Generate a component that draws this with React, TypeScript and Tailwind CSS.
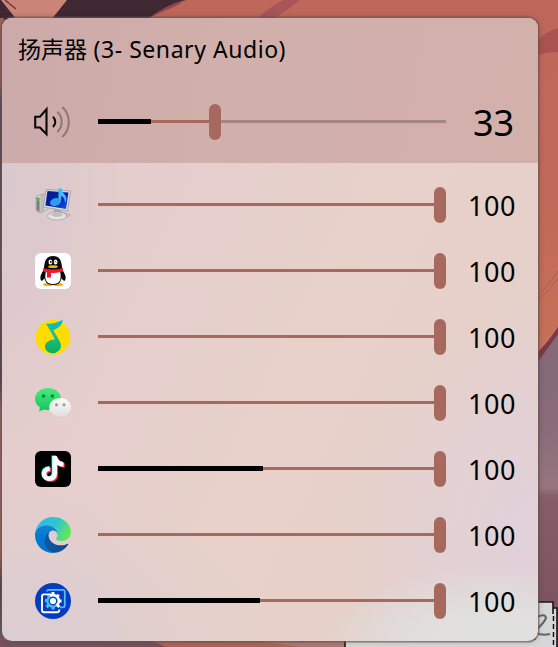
import type { ReactNode } from "react";

const fontStack = "font-['Noto_Sans','Noto_Sans_CJK_SC',sans-serif]";

function Wallpaper() {
  return (
    <svg className="absolute inset-0" width="558" height="647" viewBox="0 0 558 647" aria-hidden="true">
      <defs>
        <linearGradient id="coral" x1="0" y1="0" x2="0" y2="1">
          <stop offset="0" stopColor="#be675a" />
          <stop offset=".35" stopColor="#c26a58" />
          <stop offset=".55" stopColor="#c67158" />
        </linearGradient>
        <linearGradient id="mauve" x1="0" y1="0" x2="0" y2="1">
          <stop offset="0" stopColor="#826a75" />
          <stop offset=".3" stopColor="#886c78" />
          <stop offset=".5" stopColor="#96757f" />
          <stop offset=".53" stopColor="#855e68" />
          <stop offset="1" stopColor="#78505d" />
        </linearGradient>
        <linearGradient id="leftEdge" x1="0" y1="0" x2="0" y2="1">
          <stop offset="0" stopColor="#a0635c" />
          <stop offset=".1" stopColor="#a0635c" />
          <stop offset=".13" stopColor="#594b56" />
          <stop offset=".4" stopColor="#6a4c59" />
          <stop offset=".58" stopColor="#4c3f4a" />
          <stop offset=".62" stopColor="#9c675f" />
          <stop offset=".85" stopColor="#a56c60" />
          <stop offset=".9" stopColor="#533b47" />
          <stop offset="1" stopColor="#74616a" />
        </linearGradient>
      </defs>
      <rect width="558" height="647" fill="url(#coral)" />
      <path d="M0 0H186Q165 7 146 20H0Z" fill="#3f2831" />
      <path d="M1 0H67L51 20H17Q8 9 1 0Z" fill="#ca8478" />
      <path d="M5 0L16 9" stroke="#67313c" strokeWidth="1.3" />
      <path d="M184 0Q166 5 149 18L162 12Q180 5 184 0Z" fill="#8e4650" />
      <path d="M284 0Q266 9 258 18H275Q287 10 300 0Z" fill="#a8555a" />
      <path d="M538 39Q548 31 558 28V52Q548 52 538 55Z" fill="#a9534f" />
      <path d="M538 296Q551 282 558 271M538 300Q549 292 558 278" stroke="#a76058" strokeWidth="1" fill="none" />
      <path d="M538 361Q546 352 558 328V647H538Z" fill="url(#mauve)" />
      <path d="M538 352Q548 342 558 327V334Q548 348 538 362Z" fill="#7d3948" />
      <rect y="18" width="4" height="629" fill="url(#leftEdge)" />
      <path d="M0 640H150L170 647H0Z" fill="#75515d" />
      <path d="M150 640H344V647H166Z" fill="#aa6656" />
      <path d="M250 640H344V647H300Z" fill="#ad7a71" />
      <path d="M345 647V640H536V602H553V608H557V647Z" fill="#d7d7d7" />
      <path d="M345 647V640M536 602H553V614M553 608H557V647" stroke="#15171b" strokeWidth="1.6" fill="none" />
      <path d="M553.5 616V647" stroke="#111" strokeWidth="1.5" strokeDasharray="5 3" />
      <path d="M537 617Q545 613 546 618Q543 625 533 632Q541 636 550 634" stroke="#60656b" strokeWidth="2" fill="none" />
    </svg>
  );
}

function SpeakerIcon() {
  return (
    <svg width="38" height="36" viewBox="34 104 38 36" fill="none" aria-hidden="true">
      <path d="M35.2 116.8H40L46.5 109.3V134.2L40 127.5H35.2Z" stroke="#080606" strokeWidth="2.1" />
      <path d="M53 116.7Q57.5 121.8 53 127" stroke="#080606" strokeWidth="2" />
      <path d="M57.3 111.7A14 14 0 0 1 57.3 132M62.3 107A20.5 20.5 0 0 1 62.3 137" stroke="#8d7775" strokeWidth="2" />
    </svg>
  );
}

function SystemIcon() {
  return (
    <svg width="36" height="36" viewBox="0 0 36 36" aria-hidden="true">
      <defs>
        <linearGradient id="screen" x1="0" y1="0" x2="1" y2="1"><stop stopColor="#061a80" /><stop offset=".55" stopColor="#0622b8" /><stop offset="1" stopColor="#1b55ef" /></linearGradient>
        <linearGradient id="tower"><stop stopColor="#f5f5f3" /><stop offset=".5" stopColor="#b3b4b3" /><stop offset="1" stopColor="#e9e9e7" /></linearGradient>
      </defs>
      <path d="M1 9L9 7L13 9V22L5 26L1 24Z" fill="url(#tower)" stroke="#999c98" strokeWidth=".7" />
      <path d="M1.5 10L4.5 11V25L1.5 23Z" fill="#777d76" /><path d="M2 12L4 12.5V14L2 13.5Z" fill="#50df16" />
      <ellipse cx="26" cy="28" rx="10" ry="3" fill="#bdaaac" opacity=".6" />
      <path d="M19 22L27 24L26 29H19Z" fill="#a7aaa9" />
      <ellipse cx="22" cy="29" rx="9.5" ry="4" fill="#e4e5e4" stroke="#9b9e9d" strokeWidth=".7" />
      <ellipse cx="22" cy="27.8" rx="6" ry="2" fill="#bfc1c1" />
      <path d="M11 2.5L35.5 4L32.5 24L8.5 20Z" fill="#dfe1e0" stroke="#92918e" strokeWidth=".7" />
      <path d="M12.4 4L33.5 5.5L31 22L10.4 18.6Z" fill="url(#screen)" />
      <path d="M24.8 1.5V15" stroke="#42b8f2" strokeWidth="2.6" />
      <path d="M24 1.5H26.5Q27 5 29.5 7.5Q33 11 30 16Q30 10 26 9Z" fill="#48bbf3" />
      <ellipse cx="20.5" cy="15" rx="5.5" ry="3.9" transform="rotate(-18 20.5 15)" fill="#2f9fec" />
    </svg>
  );
}

function QQIcon() {
  return (
    <svg width="36" height="36" viewBox="0 0 36 36" aria-hidden="true">
      <rect width="36" height="36" rx="6" fill="#fff" />
      <path d="M10 15Q3 24 6.5 28Q9 27 12 21M26 15Q33 24 29.5 28Q27 27 24 21" fill="#070707" />
      <ellipse cx="13" cy="31.4" rx="5" ry="1.5" fill="#ffae00" /><ellipse cx="23" cy="31.4" rx="5" ry="1.5" fill="#ffae00" />
      <path d="M9 16Q9 3 18 3Q27 3 27 16V22Q27 32 18 32Q9 32 9 22Z" fill="#080808" />
      <path d="M11 18Q18 21 25 18Q28 31 18 31Q8 31 11 18Z" fill="#fff" />
      <path d="M8 15Q18 18 28 15V18.6Q18 21.5 8 18.6Z" fill="#f1172c" /><path d="M12 19H16V24.5H12Z" fill="#eb172b" />
      <ellipse cx="15.4" cy="9" rx="1.9" ry="2.5" fill="#fff" /><ellipse cx="20.6" cy="9" rx="1.9" ry="2.5" fill="#fff" />
      <circle cx="15.8" cy="9" r=".9" fill="#111" /><path d="M19.6 9.3Q20.5 7.8 21.3 9.3" stroke="#111" strokeWidth=".9" fill="none" />
      <ellipse cx="18" cy="13.7" rx="4.8" ry="1.4" fill="#ffb400" />
    </svg>
  );
}

function QQMusicIcon() {
  return (
    <svg width="36" height="36" viewBox="0 0 36 36" aria-hidden="true">
      <defs><linearGradient id="musicGreen" x1="0" y1="0" x2="0" y2="1"><stop stopColor="#0cbfba" /><stop offset=".5" stopColor="#20bb86" /><stop offset="1" stopColor="#0bad60" /></linearGradient></defs>
      <circle cx="18" cy="18.3" r="17.4" fill="#ffdc00" />
      <path d="M11.5 4.6Q21 5.2 27.8 .5Q27.5 8 18.3 11.2L24.8 22.6Q27.5 28 24 31.5Q19.5 35.8 13.5 33.2Q8.8 30.5 10.4 25.2Q12.6 20.4 20 20.4L16.3 13.5L11.5 5.4Z" fill="url(#musicGreen)" />
    </svg>
  );
}

function WeChatIcon() {
  return (
    <svg width="36" height="36" viewBox="0 0 36 36" aria-hidden="true">
      <defs><linearGradient id="chatGreen" x1="0" y1="0" x2="0" y2="1"><stop stopColor="#4bea7c" /><stop offset="1" stopColor="#12c65c" /></linearGradient><linearGradient id="chatWhite" x1="0" y1="0" x2="0" y2="1"><stop stopColor="#fafafa" /><stop offset="1" stopColor="#dedede" /></linearGradient></defs>
      <path d="M13 3C5.8 3 0 7.8 0 14Q0 19 5 22.5L4 26.5L9 24.5Q11 25 13 25C20 25 26 20.5 26 14S20 3 13 3Z" fill="url(#chatGreen)" />
      <circle cx="8.6" cy="11" r="1.8" fill="#078544" /><circle cx="17.3" cy="11" r="1.8" fill="#078544" />
      <path d="M25.2 13C19 13 14.2 17 14.2 22.3S19 31.5 25.2 31.5Q27.5 31.5 29 31L32 32.7L31.5 29.5Q36 27 36 22.3C36 17 31.5 13 25.2 13Z" fill="url(#chatWhite)" />
      <circle cx="21.5" cy="19.8" r="1.5" fill="#929695" /><circle cx="29" cy="19.8" r="1.5" fill="#929695" />
    </svg>
  );
}

function DouyinIcon() {
  const note = "M17.4 5H21.8Q22.6 10.4 28.5 11.2V15.8Q24.8 15.6 22 13.7V22Q21.8 30 14.5 30Q7 29.5 7 22.7Q7.2 16 14.8 15.4V20Q11.3 20.2 11.3 22.8Q11.5 25.6 14.5 25.6Q17.4 25.5 17.4 22Z";
  return (
    <svg width="36" height="36" viewBox="0 0 36 36" aria-hidden="true">
      <rect width="36" height="36" rx="6" fill="#000" />
      <path d={note} transform="translate(-.8 -.5)" fill="#25f4ee" /><path d={note} transform="translate(1.2 1)" fill="#fe2c55" /><path d={note} fill="#fff" />
    </svg>
  );
}

function EdgeIcon() {
  return (
    <svg width="36" height="36" viewBox="0 0 256 256" aria-hidden="true">
      <defs>
        <linearGradient id="edgeDark"><stop stopColor="#0c59a4" /><stop offset="1" stopColor="#114a8b" /></linearGradient>
        <linearGradient id="edgeBlue" x1="0" y1="0" x2="0" y2="1"><stop stopColor="#1687d0" /><stop offset=".5" stopColor="#0078d4" /><stop offset="1" stopColor="#0671cc" /></linearGradient>
        <linearGradient id="edgeTop" x1="0" y1=".3" x2="1" y2=".7"><stop stopColor="#35b8f0" /><stop offset=".5" stopColor="#2dc5cf" /><stop offset=".75" stopColor="#51d890" /><stop offset="1" stopColor="#66eb43" /></linearGradient>
      </defs>
      <path d="M231 190.5c-3.4 1.8-6.9 3.4-10.5 4.7a101.9 101.9 0 0 1-35.9 6.5c-47.3 0-88.5-32.5-88.5-74.3a31.5 31.5 0 0 1 16.4-27.3c-42.8 1.8-53.8 46.4-53.8 72.5 0 74 68.1 81.4 82.8 81.4 7.9 0 19.8-2.3 27-4.6l1.3-.4a128.3 128.3 0 0 0 66.6-52.8 4 4 0 0 0-5.4-5.7z" fill="url(#edgeDark)" />
      <path d="M105.7 241.4a79.2 79.2 0 0 1-22.7-21.3 80.7 80.7 0 0 1 29.5-120c3.1-1.5 8.5-4.1 15.6-4a32.4 32.4 0 0 1 25.7 13 31.9 31.9 0 0 1 6.3 18.7c0-.2 24.5-79.6-80-79.6-43.9 0-80 41.6-80 78.2a130.2 130.2 0 0 0 12.1 56 128 128 0 0 0 156.4 67 75.5 75.5 0 0 1-62.9-8z" fill="url(#edgeBlue)" />
      <path d="M152.3 148.9c-.9 1-3.4 2.5-3.4 5.6 0 2.6 1.7 5.1 4.7 7.2 14.4 10 41.5 8.7 41.5 8.7a59.6 59.6 0 0 0 30.3-8.3 61.4 61.4 0 0 0 30.4-52.9c.3-22.4-8-37.3-11.3-43.9C223.3 23.9 177.7 0 128.1 0a128 128 0 0 0-128 126.2c.5-36.5 36.8-66 80-66 3.5 0 23.5.3 42 10a72.6 72.6 0 0 1 30.9 29.3c6.1 10.6 7.2 24.1 7.2 29.5s-2.7 13.3-7.9 19.9z" fill="url(#edgeTop)" />
    </svg>
  );
}

function CaptureIcon() {
  return (
    <svg width="36" height="36" viewBox="0 0 36 36" fill="none" aria-hidden="true">
      <circle cx="18" cy="18" r="18" fill="#053dc2" />
      <path d="M12 8.6Q12 6.8 14 6.8H28Q29.8 6.8 29.8 8.5V22.5Q29.8 24.3 28 24.3H25" stroke="#55baff" strokeWidth="1.8" />
      <path d="M13 11.5L14.5 13.5M10 17.5H12.5M11.5 24L14 22M18 26.5V24" stroke="#4cb9fb" strokeWidth="3" />
      <circle cx="18" cy="18" r="5.6" stroke="#4cb9fb" strokeWidth="2.4" />
      <path d="M15.2 13.1A5.6 5.6 0 0 1 21.5 22.4" stroke="#fff" strokeWidth="2.4" />
      <path d="M18 9V12.5M23.6 11.7L22 14M26.5 18H24M24.4 24L22.3 22" stroke="#fff" strokeWidth="3" />
      <circle cx="18" cy="18" r="3.1" fill="#fff" />
      <path d="M17 11.4H9Q7 11.4 7 13.4V27.3Q7 29.3 9 29.3H22Q24.3 29.3 24.3 26.5" stroke="#fff" strokeWidth="1.9" />
    </svg>
  );
}

type VolumeSliderProps = { level: number; peak?: number; main?: boolean };

function VolumeSlider({ level, peak = 0, main = false }: VolumeSliderProps) {
  return (
    <div className="relative h-9 w-[348px] pt-4" role="slider" aria-valuemin={0} aria-valuemax={100} aria-valuenow={level}>
      <div className={main ? "h-[3px] w-full bg-[#a38780]" : "h-[3px] w-full bg-[#a7685e]"} />
      <div className="absolute left-0 top-4 h-[3px] bg-[#a7685e]" style={{ width: (level / 100) * 348 }} />
      <div className="absolute left-0 top-[15px] h-[5px] bg-black" style={{ width: peak }} />
      <div className="absolute top-0 h-9 w-3 rounded-full bg-[#a7685e]" style={{ left: Math.round((level / 100) * 336) }} />
    </div>
  );
}

const sessions: { name: string; icon: ReactNode; peak?: number }[] = [
  { name: "system", icon: <SystemIcon /> },
  { name: "qq", icon: <QQIcon /> },
  { name: "music", icon: <QQMusicIcon /> },
  { name: "wechat", icon: <WeChatIcon /> },
  { name: "douyin", icon: <DouyinIcon />, peak: 165 },
  { name: "edge", icon: <EdgeIcon /> },
  { name: "capture", icon: <CaptureIcon />, peak: 162 },
];

export default function App() {
  return (
    <div className={`relative h-[647px] w-[558px] overflow-hidden pl-[2px] pt-[18px] text-black ${fontStack}`}>
      <Wallpaper />
      <main className="relative h-[623px] w-[536px] overflow-hidden rounded-[10px] bg-[#e5cfca] bg-[radial-gradient(ellipse_170px_75px_at_92%_100%,#e0e1df_0%,#e0dfde_45%,transparent_100%),radial-gradient(ellipse_200px_220px_at_100%_82%,#e1d1d9_0%,transparent_100%),radial-gradient(ellipse_120px_260px_at_0%_27%,#d9c8ce_0%,transparent_100%),radial-gradient(ellipse_260px_150px_at_0%_100%,#dacdd3_0%,transparent_100%),linear-gradient(115deg,#e3cccc_15%,#e5cecc_35%,#e7d1c9_55%,#e6d0c9_75%,#e2cfd2_100%)] shadow-[0_0_0_1.5px_rgba(105,88,88,0.65),0_0_6px_rgba(40,25,25,0.3)]">
        <header className="flex h-[145px] flex-col bg-[#d2afaa] bg-[linear-gradient(100deg,#ccaaaa_0%,#d1afaa_40%,#d3b0aa_100%)] pt-[15px]">
          <h1 className="h-8 whitespace-nowrap pl-4 text-[23px] leading-8">扬声器<span className="tracking-[0.55px]"> (3- Senary Audio)</span></h1>
          <div className="mt-[39px] flex h-9 items-center pl-8">
            <SpeakerIcon />
            <div className="ml-[26px]"><VolumeSlider level={33} peak={53} main /></div>
            <span className="ml-[27px] pt-px text-[36px] leading-9">33</span>
          </div>
        </header>
        <section className="flex flex-col pt-[9px]">
          {sessions.map((session) => (
            <div key={session.name} className="flex h-[66px] items-center pl-[33px]">
              {session.icon}
              <div className="ml-[27px]"><VolumeSlider level={100} peak={session.peak} /></div>
              <span className="ml-[22px] pt-px text-[27px] leading-9 tracking-[0.5px]">100</span>
            </div>
          ))}
        </section>
      </main>
    </div>
  );
}
